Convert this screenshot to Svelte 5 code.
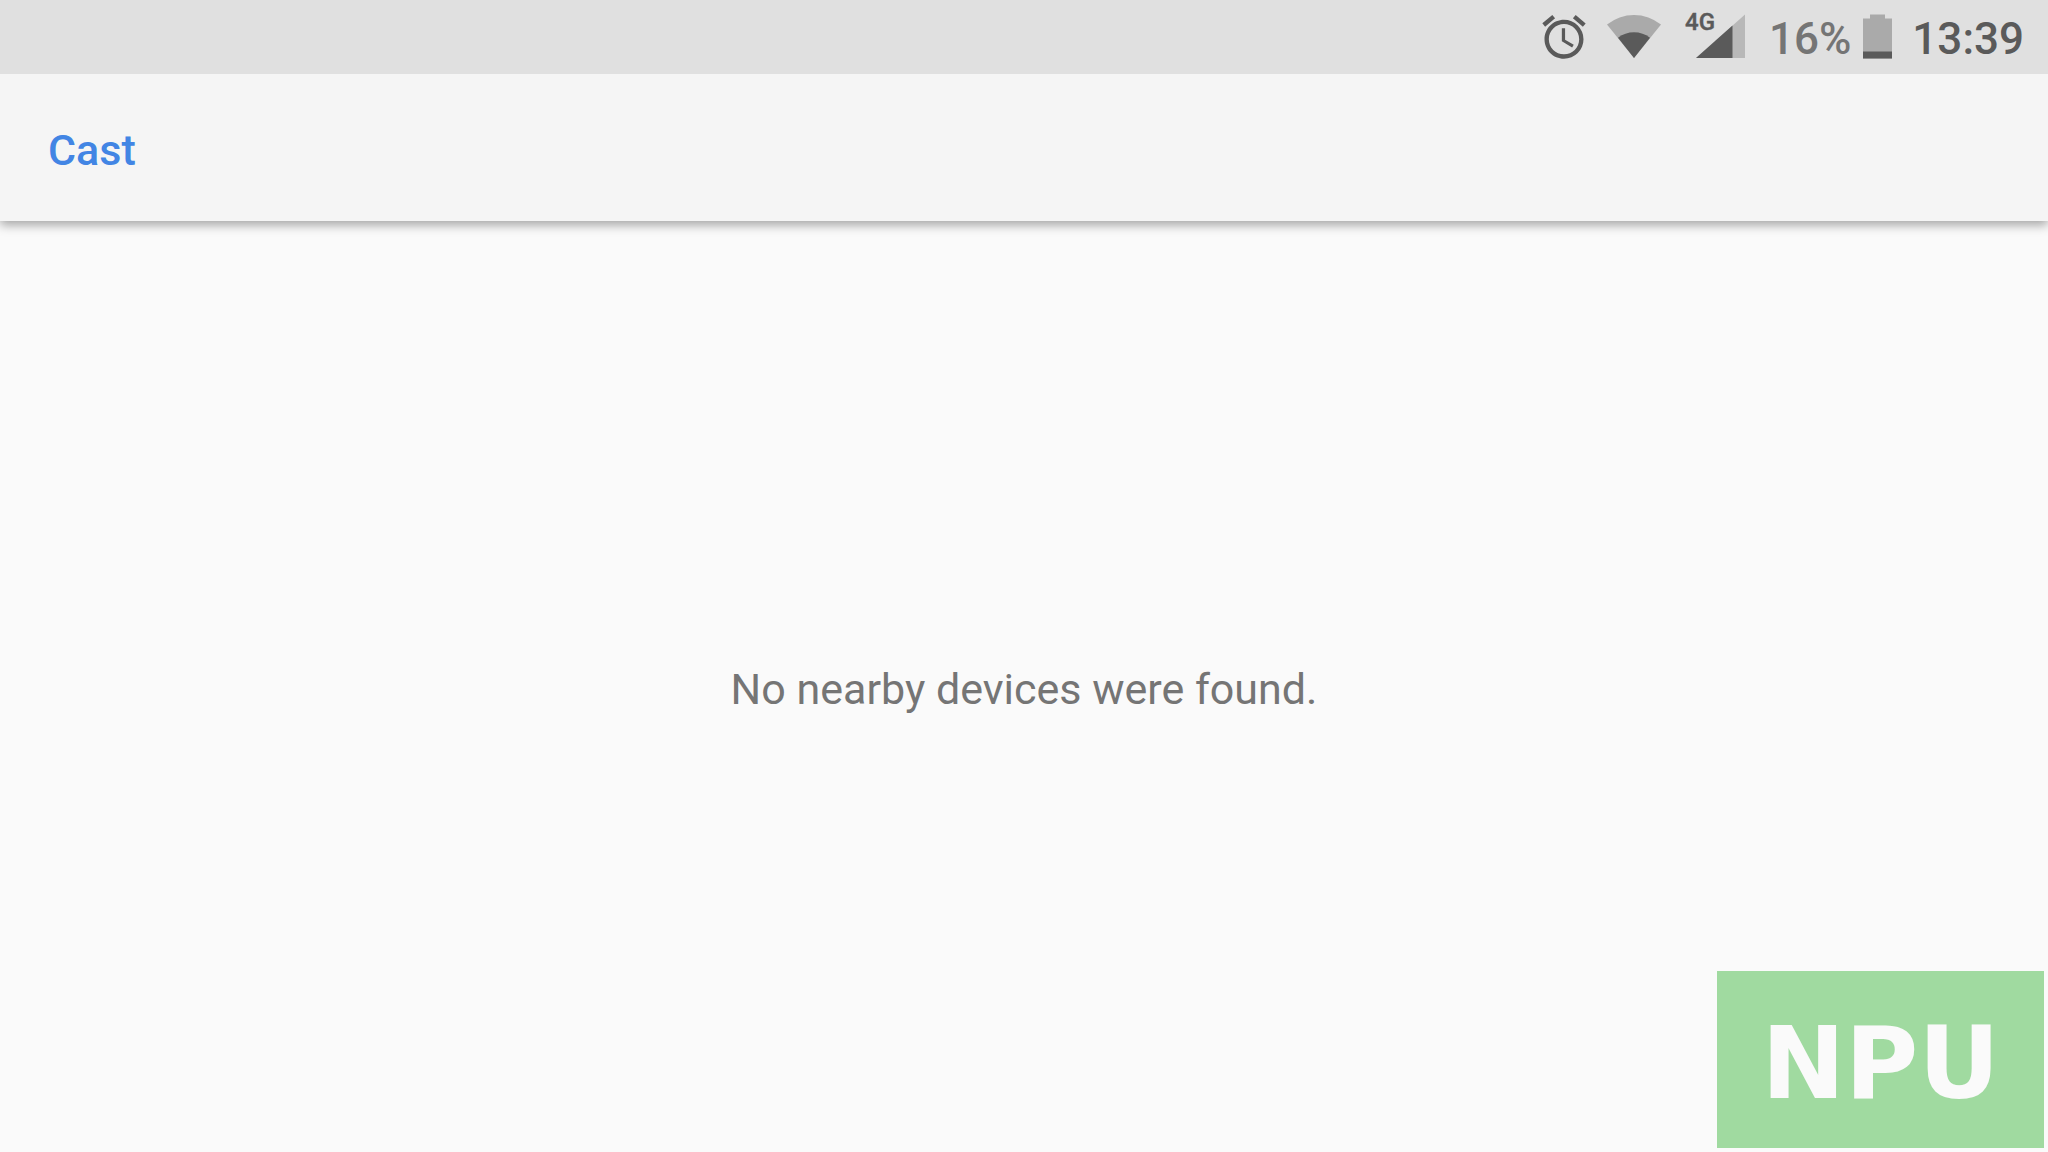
<script>
	export let title = 'Cast';
	export let battery = 16;
	export let time = '13:39';
	export let devices = [];

	$: chargeHeight = Math.round((battery / 100) * 44);
</script>

<svelte:head>
	<title>{title}</title>
</svelte:head>

<div class="screen">
	<div class="status-bar">
		<svg class="alarm" viewBox="0 0 24 24" width="52" height="52" role="img" aria-label="Alarm set">
			<path
				d="M22 5.72l-4.6-3.86-1.29 1.53 4.6 3.86L22 5.72zM7.88 3.39L6.6 1.86 2 5.71l1.29 1.53 4.59-3.85zM12.5 8H11v6l4.75 2.85.75-1.23-4-2.37V8zM12 4c-4.97 0-9 4.03-9 9s4.02 9 9 9a9 9 0 0 0 0-18zm0 16c-3.87 0-7-3.13-7-7s3.13-7 7-7 7 3.13 7 7-3.13 7-7 7z"
			/>
		</svg>

		<svg class="wifi" viewBox="0 0 54 52" width="54" height="52" role="img" aria-label="Wi-Fi">
			<path class="faint" d="M27 47L0 13.5A43 43 0 0 1 54 13.5z" />
			<path d="M27 47L11 26.7A26 26 0 0 1 43 26.7z" />
		</svg>

		<svg class="signal" viewBox="-4 -10 64 72" width="64" height="72" role="img" aria-label="4G signal">
			<path class="fainter" d="M11 47L60 3.5V47z" />
			<path d="M11 47L47.5 14.6V47z" />
			<text x="0" y="19">4G</text>
		</svg>

		<span class="percent">{battery}%</span>

		<svg class="battery" viewBox="0 0 29 52" width="29" height="52" role="img" aria-label="Battery">
			<path class="faint" d="M7 3.5h15v4h7v40H0v-40h7z" />
			<rect x="0" y={47.5 - chargeHeight} width="29" height={chargeHeight} />
		</svg>

		<time>{time}</time>
	</div>

	<header>
		<h1>{title}</h1>
	</header>

	<main>
		{#if devices.length}
			<ul>
				{#each devices as device}
					<li>{device}</li>
				{/each}
			</ul>
		{:else}
			<p>No nearby devices were found.</p>
		{/if}
	</main>

	<div class="watermark">NPU</div>
</div>

<style>
	:global(body) {
		margin: 0;
		background: #fafafa;
	}

	.screen {
		position: relative;
		display: flex;
		flex-direction: column;
		min-height: 100vh;
		font-family: Roboto, 'Liberation Sans', sans-serif;
		font-size: 43px;
		line-height: 52px;
		color: #757575;
	}

	.status-bar {
		z-index: 2;
		display: flex;
		align-items: center;
		justify-content: flex-end;
		box-sizing: border-box;
		height: 74px;
		padding: 0 24px;
		background: #e0e0e0;
		font-size: 44px;
		font-weight: 500;
	}

	svg {
		flex: none;
		fill: #5a5a5a;
	}

	.faint {
		fill: #aaa;
	}

	.fainter {
		fill: #b8b8b8;
	}

	.wifi {
		margin-left: 17px;
	}

	.signal {
		margin-left: 20px;
	}

	.signal text {
		font-size: 24px;
		font-weight: 500;
		stroke: #5a5a5a;
		stroke-width: 0.4;
	}

	.percent,
	time {
		padding-top: 4px;
	}

	.percent {
		margin-left: 24px;
	}

	.battery {
		margin-left: 12px;
	}

	time {
		margin-left: 20px;
		color: #5a5a5a;
	}

	header {
		z-index: 1;
		display: flex;
		align-items: center;
		box-sizing: border-box;
		height: 147px;
		padding: 4px 48px 0;
		background: #f5f5f5;
		box-shadow: 0 4px 10px rgba(0, 0, 0, 0.35);
	}

	h1 {
		margin: 0;
		font-size: 43px;
		font-weight: 500;
		color: #4285e4;
	}

	main {
		flex: 1;
		display: flex;
		align-items: center;
		justify-content: center;
		padding-top: 4px;
	}

	p {
		margin: 0;
	}

	ul {
		margin: 0;
		padding: 0;
		list-style: none;
	}

	.watermark {
		position: absolute;
		right: 4px;
		bottom: 4px;
		display: flex;
		align-items: center;
		justify-content: center;
		box-sizing: border-box;
		width: 327px;
		height: 177px;
		padding-top: 8px;
		background: #a0daa0;
		color: #fafafa;
		font-family: 'DejaVu Sans', sans-serif;
		font-size: 100px;
		font-weight: 700;
	}
</style>
